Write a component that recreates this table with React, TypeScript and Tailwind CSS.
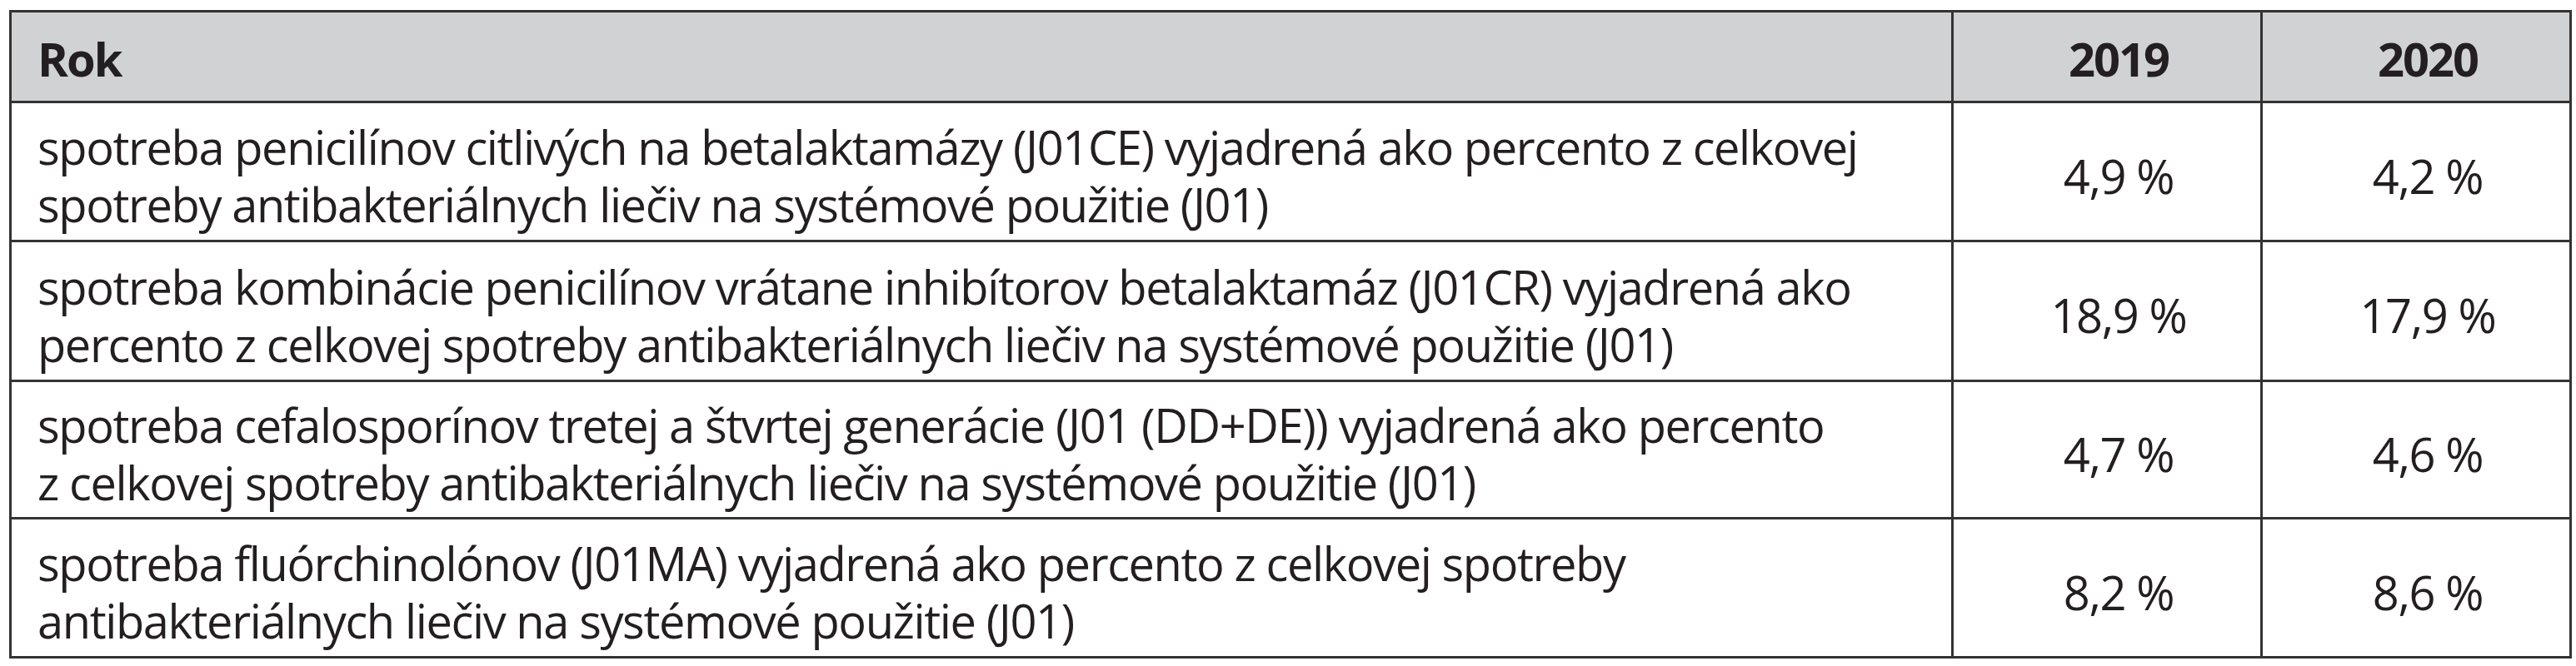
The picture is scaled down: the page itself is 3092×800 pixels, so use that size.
const rows = [
  {
    text: [
      "spotreba penicilínov citlivých na betalaktamázy (J01CE) vyjadrená ako percento z celkovej",
      "spotreby antibakteriálnych liečiv na systémové použitie (J01)",
    ],
    a: "4,9 %",
    b: "4,2 %",
    h: "h-[167px]",
  },
  {
    text: [
      "spotreba kombinácie penicilínov vrátane inhibítorov betalaktamáz (J01CR) vyjadrená ako",
      "percento z celkovej spotreby antibakteriálnych liečiv na systémové použitie (J01)",
    ],
    a: "18,9 %",
    b: "17,9 %",
    h: "h-[168px]",
  },
  {
    text: [
      "spotreba cefalosporínov tretej a štvrtej generácie (J01 (DD+DE)) vyjadrená ako percento",
      "z celkovej spotreby antibakteriálnych liečiv na systémové použitie (J01)",
    ],
    a: "4,7 %",
    b: "4,6 %",
    h: "h-[165px]",
  },
  {
    text: [
      "spotreba fluórchinolónov (J01MA) vyjadrená ako percento z celkovej spotreby",
      "antibakteriálnych liečiv na systémové použitie (J01)",
    ],
    a: "8,2 %",
    b: "8,6 %",
    h: "h-[167px]",
  },
];

export default function App() {
  return (
    <div className="min-h-[800px] w-[3092px] bg-white pl-[11px] pt-[12px] font-['Open_Sans',sans-serif] text-[#231f20]">
      <table className="w-[3073px] table-fixed border-collapse border-[3px] border-[#333333]">
        <colgroup>
          <col className="w-[2331px]" />
          <col className="w-[371px]" />
          <col className="w-[371px]" />
        </colgroup>
        <thead>
          <tr className="h-[109px] bg-[#d1d2d4] text-[56px] font-bold tracking-[-0.035em]">
            <th className="border-[3px] border-[#333333] pl-[31px] pt-[4px] text-left">Rok</th>
            <th className="border-[3px] border-[#333333] pl-[28px] pt-[4px] text-center">2019</th>
            <th className="border-[3px] border-[#333333] pl-[28px] pt-[4px] text-center">2020</th>
          </tr>
        </thead>
        <tbody>
          {rows.map((r, i) => (
            <tr key={i} className={`${r.h} text-[56px] leading-[69px] tracking-[-0.025em]`}>
              <td className="border-[3px] border-[#333333] pl-[31px] pt-[10px] align-middle">
                {r.text[0]}
                <br />
                {r.text[1]}
              </td>
              <td className="border-[3px] border-[#333333] pl-[28px] pt-[10px] text-center align-middle">{r.a}</td>
              <td className="border-[3px] border-[#333333] pl-[28px] pt-[10px] text-center align-middle">{r.b}</td>
            </tr>
          ))}
        </tbody>
      </table>
    </div>
  );
}
